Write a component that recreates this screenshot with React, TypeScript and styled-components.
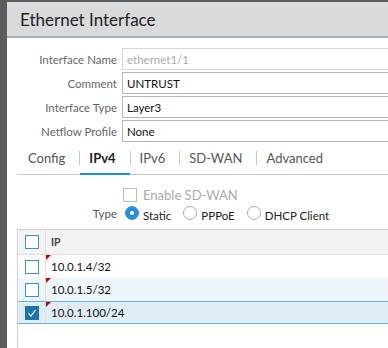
import React, { ReactElement } from 'react';
import styled, { createGlobalStyle } from 'styled-components';

const GlobalStyle = createGlobalStyle`
  html, body {
    margin: 0;
    padding: 0;
    background: #5b5b5b;
    font-family: Lato, "Open Sans", sans-serif;
  }
`;

const Page = styled.div`
  width: 388px;
  height: 348px;
  overflow: hidden;
  padding: 2px 0 0 7px;
  box-sizing: border-box;
  background: #5b5b5b;
`;

const Dialog = styled.div`
  background: #fff;
  height: 100%;
  width: 400px;
`;

const Header = styled.div`
  height: 34px;
  background: #d9dadc;
  border-bottom: 2px solid #a9abae;
  display: flex;
  align-items: center;
  padding-left: 13px;
  font-size: 17px;
  color: #222;
`;

const Body = styled.div`
  padding: 10px 0 0 10px;
`;

const Form = styled.div`
  display: grid;
  grid-template-columns: 100px 1fr;
  column-gap: 5px;
  row-gap: 2px;
  align-items: center;
`;

const Label = styled.div`
  text-align: right;
  font-size: 11.5px;
  color: #666;
`;

const Input = styled.div<{ $disabled?: boolean }>`
  height: 20px;
  border: 1px solid ${(p) => (p.$disabled ? '#d8d8d8' : '#b4b4b4')};
  border-right: 0;
  display: flex;
  align-items: center;
  padding-left: 4px;
  font-size: 11.5px;
  color: ${(p) => (p.$disabled ? '#aaa' : '#111')};
`;

const Tabs = styled.div`
  display: flex;
  align-items: stretch;
  border-bottom: 1px solid #c8c8c8;
  margin-top: 5px;
  height: 27px;
`;

const Tab = styled.div<{ $active?: boolean }>`
  padding: 0 14px 5px 9px;
  font-size: 13px;
  display: flex;
  align-items: center;
  color: ${(p) => (p.$active ? '#222' : '#555')};
  font-weight: ${(p) => (p.$active ? 700 : 400)};
  border-bottom: 2px solid ${(p) => (p.$active ? '#1c8fd9' : 'transparent')};
  margin-bottom: -1px;

  &:first-child {
    padding-left: 11px;
  }
`;

const TabSep = styled.div`
  width: 1px;
  height: 14px;
  background: #c6c6c6;
  align-self: center;
  margin-top: -5px;
`;

const Options = styled.div`
  display: grid;
  grid-template-columns: 100px 1fr;
  column-gap: 6px;
  row-gap: 6px;
  margin-top: 12px;
  align-items: center;
`;

const Inline = styled.div`
  display: flex;
  align-items: center;
  gap: 6px;
  font-size: 13px;
`;

const Box = styled.span<{ $disabled?: boolean; $checked?: boolean }>`
  width: 12px;
  height: 12px;
  border: 1px solid ${(p) => (p.$disabled ? '#bdbdbd' : p.$checked ? '#1b76b0' : '#3c92c6')};
  background: ${(p) => (p.$checked ? '#1b76b0' : '#fff')};
  display: inline-flex;
  align-items: center;
  justify-content: center;
  flex: none;
`;

const Muted = styled.span`
  color: #aaa;
`;

const TypeLabel = styled.div`
  text-align: right;
  font-size: 11.5px;
  color: #555;
  margin-top: -5px;
`;

const RadioGroup = styled.div`
  display: flex;
  align-items: center;
  gap: 12px;
  margin-left: 2px;
`;

const RadioItem = styled.div`
  display: flex;
  align-items: center;
  gap: 4px;
  font-size: 11.5px;
  color: #222;
`;

const Radio = styled.span<{ $on?: boolean }>`
  width: 12px;
  height: 12px;
  border-radius: 50%;
  border: 1px solid ${(p) => (p.$on ? '#2a8fe0' : '#aaa')};
  background: ${(p) => (p.$on ? '#2a8fe0' : '#fff')};
  position: relative;
  flex: none;
  margin-top: -6px;

  &::after {
    content: '';
    display: ${(p) => (p.$on ? 'block' : 'none')};
    position: absolute;
    left: 4px;
    top: 4px;
    width: 4px;
    height: 4px;
    border-radius: 50%;
    background: #fff;
  }
`;

const Table = styled.div`
  margin-top: 7px;
  border-left: 1px solid #cfcfcf;
  border-top: 1px solid #cfcfcf;
  height: 120px;
`;

const Row = styled.div<{ $bg: string; $selected?: boolean }>`
  display: grid;
  grid-template-columns: 28px 1fr;
  height: ${(p) => (p.$selected ? '21px' : '23px')};
  background: ${(p) => p.$bg};
  border-top: ${(p) => (p.$selected ? '1px solid #66b3e0' : '0')};
  border-bottom: ${(p) => (p.$selected ? '1px solid #66b3e0' : '0')};
`;

const HeadRow = styled(Row)`
  height: 24px;
  border-bottom: 1px solid #dedede;
`;

const CheckCell = styled.div`
  display: flex;
  align-items: center;
  justify-content: center;
  border-right: 1px solid #e0e0e0;
`;

const IpCell = styled.div<{ $head?: boolean }>`
  position: relative;
  display: flex;
  align-items: center;
  padding-left: 5px;
  font-size: ${(p) => (p.$head ? '10.5px' : '11.5px')};
  font-weight: ${(p) => (p.$head ? 700 : 400)};
  color: ${(p) => (p.$head ? '#444' : '#111')};
`;

const Flag = styled.span`
  position: absolute;
  left: 0;
  top: 0;
  width: 0;
  height: 0;
  border-top: 5px solid #c00000;
  border-right: 5px solid transparent;
`;

const Check = () => (
  <svg width="10" height="10" viewBox="0 0 10 10">
    <path d="M1.5 5.5 L4 8 L8.5 2" fill="none" stroke="#fff" strokeWidth="1.2" />
  </svg>
);

const rows = [
  { ip: '10.0.1.4/32', bg: '#fff', selected: false },
  { ip: '10.0.1.5/32', bg: '#eef5f8', selected: false },
  { ip: '10.0.1.100/24', bg: '#deedf6', selected: true },
];

function App(): ReactElement {
  return (
    <>
      <GlobalStyle />
      <Page>
        <Dialog>
          <Header>Ethernet Interface</Header>
          <Body>
            <Form>
              <Label>Interface Name</Label>
              <Input $disabled>ethernet1/1</Input>
              <Label>Comment</Label>
              <Input>UNTRUST</Input>
              <Label>Interface Type</Label>
              <Input>Layer3</Input>
              <Label>Netflow Profile</Label>
              <Input>None</Input>
            </Form>
            <Tabs>
              <Tab>Config</Tab>
              <TabSep />
              <Tab $active>IPv4</Tab>
              <TabSep />
              <Tab>IPv6</Tab>
              <TabSep />
              <Tab>SD-WAN</Tab>
              <TabSep />
              <Tab>Advanced</Tab>
            </Tabs>
            <Options>
              <div />
              <Inline>
                <Box $disabled />
                <Muted>Enable SD-WAN</Muted>
              </Inline>
              <TypeLabel>Type</TypeLabel>
              <RadioGroup>
                <RadioItem>
                  <Radio $on />
                  Static
                </RadioItem>
                <RadioItem>
                  <Radio />
                  PPPoE
                </RadioItem>
                <RadioItem>
                  <Radio />
                  DHCP Client
                </RadioItem>
              </RadioGroup>
            </Options>
            <Table>
              <HeadRow $bg="#f3f3f3">
                <CheckCell>
                  <Box />
                </CheckCell>
                <IpCell $head>IP</IpCell>
              </HeadRow>
              {rows.map((r) => (
                <Row key={r.ip} $bg={r.bg} $selected={r.selected}>
                  <CheckCell>
                    <Box $checked={r.selected}>{r.selected && <Check />}</Box>
                  </CheckCell>
                  <IpCell>
                    <Flag />
                    {r.ip}
                  </IpCell>
                </Row>
              ))}
            </Table>
          </Body>
        </Dialog>
      </Page>
    </>
  );
}

export default App;
